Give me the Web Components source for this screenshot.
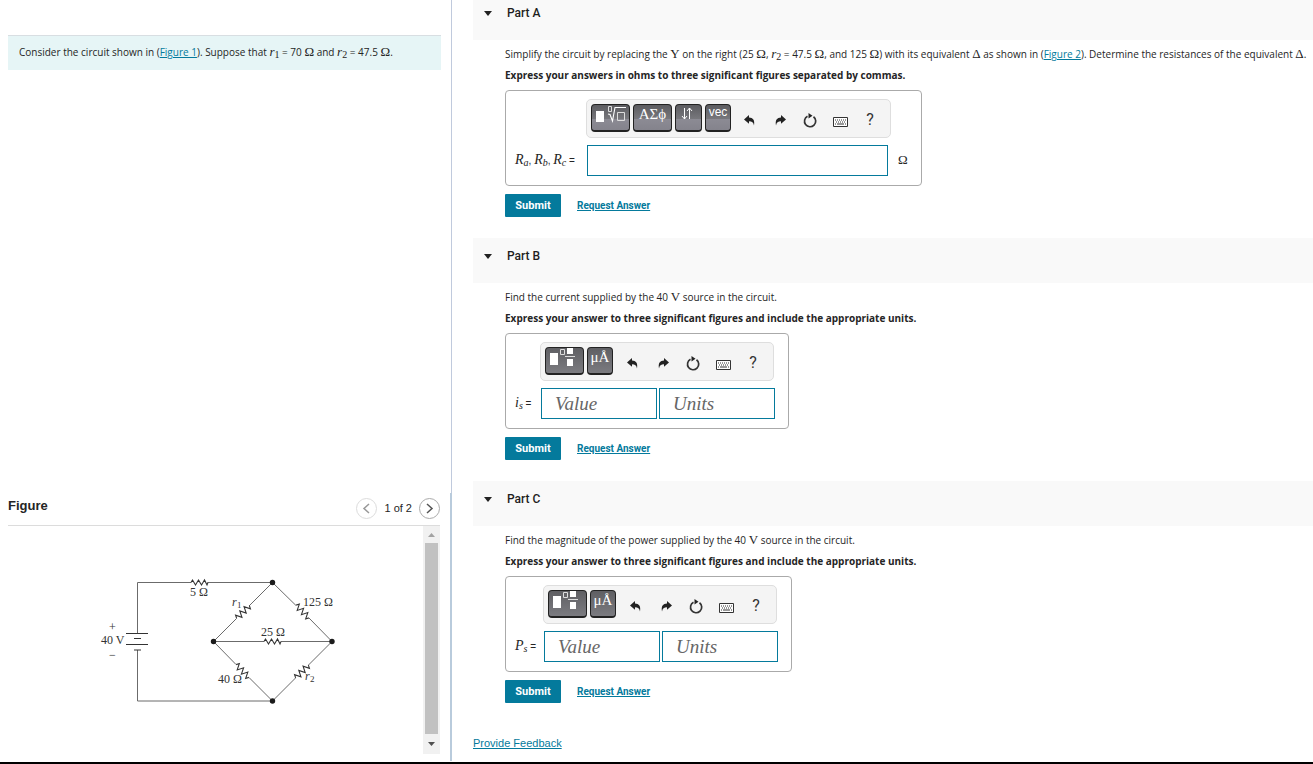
<!DOCTYPE html>
<html lang="en">
<head>
<meta charset="utf-8">
<title>Circuit homework</title>
<style>
  body { margin: 0; background: #fff; color: #252525; font-family: "Liberation Sans", Arial, sans-serif; font-size: 10px; }
</style>
</head>
<body>
<homework-page>
  <problem-intro slot="side">Consider the circuit shown in (<text-link>Figure 1</text-link>). Suppose that <math-text><i>r</i><sub>1</sub></math-text> = 70 <math-text>Ω</math-text> and <math-text><i>r</i><sub>2</sub></math-text> = 47.5 <math-text>Ω</math-text>.</problem-intro>
  <figure-viewer slot="side"><circuit-diagram></circuit-diagram></figure-viewer>

  <part-panel heading="Part A">
    <span slot="prompt">Simplify the circuit by replacing the <math-text>Y</math-text> on the right (25 <math-text>Ω</math-text>, <math-text><i>r</i><sub>2</sub></math-text> = 47.5 <math-text>Ω</math-text>, and 125 <math-text>Ω</math-text>) with its equivalent <math-text>Δ</math-text> as shown in (<text-link>Figure 2</text-link>). Determine the resistances of the equivalent <math-text>Δ</math-text>.</span>
    <span slot="hint">Express your answers in ohms to three significant figures separated by commas.</span>
    <answer-box kind="expression"></answer-box>
  </part-panel>
  <part-panel heading="Part B">
    <span slot="prompt">Find the current supplied by the 40 <math-text>V</math-text> source in the circuit.</span>
    <span slot="hint">Express your answer to three significant figures and include the appropriate units.</span>
    <answer-box kind="current"></answer-box>
  </part-panel>
  <part-panel heading="Part C">
    <span slot="prompt">Find the magnitude of the power supplied by the 40 <math-text>V</math-text> source in the circuit.</span>
    <span slot="hint">Express your answer to three significant figures and include the appropriate units.</span>
    <answer-box kind="power"></answer-box>
  </part-panel>
  <text-link slot="footer">Provide Feedback</text-link>
</homework-page>

<script>
function define(name, html, setup) {
  const template = document.createElement('template');
  template.innerHTML = html.replace('</style>\n', '</style>');
  customElements.define(name, class extends HTMLElement {
    constructor() {
      super();
      this.attachShadow({ mode: 'open' }).append(template.content.cloneNode(true));
    }
    connectedCallback() { if (setup) setup(this, this.shadowRoot); }
  });
}

define('text-link', `<style>
  :host { display: inline; }
  a { color: #047a9c; text-decoration: underline; text-underline-offset: 1px; }
</style>
<a href="#"><slot></slot></a>`);

define('math-text', `<style>
  :host { font-family: "Liberation Serif", "Times New Roman", serif; font-size: var(--math-size, 13px); font-weight: 400; line-height: 1px; }
  ::slotted(sub) { font-size: 10px; line-height: 1px; vertical-align: -2px; }
</style>
<slot></slot>`);

define('homework-page', `<style>
  :host { display: grid; grid-template-columns: minmax(0, 452fr) minmax(0, 861fr); height: 100vh; box-sizing: border-box; border-bottom: 2px solid #000; overflow: hidden; }
  aside { display: flex; flex-direction: column; justify-content: space-between; padding-top: 35px; border-right: 1px solid #c0cadd; margin-bottom: 1px; }
  main { margin-top: -5px; padding-left: 21px; }
  footer { padding-top: 12px; font-size: 11px; line-height: 14px; }
</style>
<aside><slot name="side"></slot></aside>
<main><slot></slot><footer><slot name="footer"></slot></footer></main>`);

define('problem-intro', `<style>
  :host { display: block; margin: 0 10px 0 8px; padding: 6px 11px 8px; background: #e6f5f6; border-top: 1px solid #d8dee2; line-height: 20px; white-space: nowrap; font-family: "Open Sans", "Liberation Sans", sans-serif; }
</style>
<slot></slot>`);

define('figure-viewer', `<style>
  :host { display: block; height: 268px; border-right: 2px solid #b9cbdc; margin-right: -1px; }
  header { display: flex; align-items: center; height: 32px; margin: 0 10px 0 8px; border-bottom: 1px solid #dcdcdc; }
  h2 { flex: 1; margin: 0 0 6px; font-size: 13px; line-height: 16px; }
  nav { display: flex; align-items: center; gap: 7px; margin-bottom: 2px; font-size: 11px; }
  button { display: grid; place-items: center; width: 21px; height: 21px; padding: 0; border: 1px solid #ababab; border-radius: 50%; background: #fff; }
  button:disabled { border-color: #dcdcdc; }
  svg { fill: none; stroke: #555; stroke-width: 1.5; }
  button:disabled svg { stroke: #999; }
  .frame { display: flex; height: 228px; margin: 0 10px 0 8px; }
  .view { flex: 1; min-width: 0; }
  .bar { display: flex; flex-direction: column; align-items: center; width: 17px; background: #f1f1f1; }
  .bar i { display: grid; place-items: center; height: 17px; }
  .bar b { flex: 1; width: 13px; background: #c1c1c1; }
  .bar svg { stroke: none; fill: #a3a3a3; }
  .bar .down svg { fill: #505050; }
  .bar .down { height: 20px; }
</style>
<header>
  <h2>Figure</h2>
  <nav>
    <button aria-label="Previous figure" disabled><svg width="11" height="13"><path d="M8 2 3 6.500 8 11"/></svg></button>
    <span>1 of 2</span>
    <button aria-label="Next figure"><svg width="11" height="13"><path d="M3 2 8 6.500 3 11"/></svg></button>
  </nav>
</header>
<div class="frame">
  <div class="view"><slot></slot></div>
  <div class="bar" aria-hidden="true">
    <i><svg width="7" height="4"><path d="M0 4h7L3.500 0z"/></svg></i><b></b>
    <i class="down"><svg width="7" height="4"><path d="M0 0h7L3.500 4z"/></svg></i>
  </div>
</div>`);

define('circuit-diagram', `<style>
  :host { display: block; }
  svg { display: block; }
  .wire { fill: none; stroke: #6b6b6b; stroke-width: 1; }
  .part { fill: none; stroke: #333; stroke-width: 1.1; }
  circle { fill: #1b1b1b; }
  text { font-family: "Liberation Serif", serif; font-size: 12px; fill: #333; }
  .it { font-style: italic; }
  .sub { font-size: 9px; }
</style>
<svg width="415" height="228" viewBox="8 526 415 228" role="img" aria-label="Circuit with a 40 volt source, a 5 ohm resistor and a bridge of resistors">
  <path class="wire" d="M137.500 633.500V582.500H191M207.500 582.500H272.500M137.500 650V701H272.500M272.500 582.500 249 606M236.500 618.500 213.500 641.500 236 664.500M249 677.500 272.500 701 295.500 678M308.500 665 332 641.500 309 618M296 605.500 272.500 582.500M213.500 641.500H264M281 641.500H332"/>
  <path class="part" d="M126 633.500h22M134 638.500h7M126 644.500h22M134 650h7"/>
  <path class="part" d="M191 582.500l1.500-2.500 3 5 3-5 3 5 3-5 2.500 5 1-2.500"/>
  <path class="part" d="M264 641.500l1.500-2.500 3 5 3-5 3 5 3-5 2.500 5 1-2.500"/>
  <g class="part">
    <path transform="translate(243 612) rotate(-45)" d="M-9 0l1.500-3 3 6 3-6 3 6 3-6 3 6 1.500-3"/>
    <path transform="translate(302.500 611.500) rotate(45)" d="M-9 0l1.500-3 3 6 3-6 3 6 3-6 3 6 1.500-3"/>
    <path transform="translate(242.500 671) rotate(45)" d="M-9 0l1.500-3 3 6 3-6 3 6 3-6 3 6 1.500-3"/>
    <path transform="translate(302 671.500) rotate(-45)" d="M-9 0l1.500-3 3 6 3-6 3 6 3-6 3 6 1.500-3"/>
  </g>
  <circle cx="272.500" cy="582.500" r="2.700"/><circle cx="213.500" cy="641.500" r="2.700"/><circle cx="332" cy="641.500" r="2.700"/><circle cx="272.500" cy="701" r="2.700"/>
  <text x="190" y="596">5 Ω</text>
  <text x="303" y="606">125 Ω</text>
  <text x="261" y="636">25 Ω</text>
  <text x="218" y="683">40 Ω</text>
  <text x="101" y="644">40 V</text>
  <text x="109" y="631">+</text>
  <text x="109" y="659">−</text>
  <text class="it" x="232" y="606">r</text><text class="sub" x="237" y="608">1</text>
  <text class="it" x="305" y="680">r</text><text class="sub" x="310" y="682">2</text>
</svg>`);

define('part-panel', `<style>
  :host { display: block; }
  header { display: flex; align-items: center; gap: 15px; height: 45px; box-sizing: border-box; padding: 0 0 9px 11px; background: #f9f9f9; }
  h2 { margin: 0; font: 500 12px/16px Roboto, "Liberation Sans", sans-serif; color: #1e1e1e; }
  .body { padding: 4px 0 21px 32px; }
  p { margin: 0; line-height: 21px; white-space: nowrap; font-family: "Open Sans", "Liberation Sans", sans-serif; }
  .hint { font-weight: 700; }
  .answer { margin: 4px 0 8px; }
  .actions { display: flex; align-items: center; gap: 16px; }
  button { width: 56px; height: 23px; padding: 0; border: 0; border-radius: 1px; background: #047a9c; color: #fff; font: 700 11px/16px Roboto, "Liberation Sans", sans-serif; }
  text-link { font: 700 10px/16px Roboto, "Liberation Sans", sans-serif; }
</style>
<header><svg width="8" height="5" aria-hidden="true"><path d="M0 0h8L4 5z" fill="#222"/></svg><h2></h2></header>
<div class="body">
  <p><slot name="prompt"></slot></p>
  <p class="hint"><slot name="hint"></slot></p>
  <div class="answer"><slot></slot></div>
  <div class="actions"><button type="button">Submit</button><text-link>Request Answer</text-link></div>
</div>`, (host, root) => {
  root.querySelector('h2').textContent = host.getAttribute('heading');
});

define('math-toolbar', `<style>
  :host { display: flex; align-items: flex-start; height: 39px; box-sizing: border-box; padding: 4px 5px 0 4px; border: 1px solid #dedede; border-radius: 5px; background: #f4f4f4; }
  .keys { display: flex; gap: 3px; margin-right: 4px; }
  .keys.flat { margin-right: 5px; }
  button { padding: 0; border: 0; background: none; color: #333; }
  .keys button { display: flex; justify-content: center; width: 26px; height: 28px; box-sizing: border-box; border: 1px solid #222; border-bottom-width: 2px; border-radius: 4px; background: linear-gradient(#5c5c60, #77777c 55%, #8c8b94 56%, #84838c); color: #fff; font: 12px/15px "Liberation Sans", sans-serif; }
  .keys button.mid { width: 27px; }
  .keys button.wide { width: 39px; }
  .keys .serif { font: 15px/18px "Liberation Serif", serif; }
  .flat button { background: linear-gradient(#5f5f63, #7b7b80); }
  .tool { display: grid; place-items: center; width: 30px; height: 28px; padding-top: 4px; font: 16px/20px Roboto, "Liberation Sans", sans-serif; }
</style>
<div class="keys"></div>
<button class="tool" aria-label="Undo"><svg width="12" height="11" viewBox="0 0 12 11"><path d="M5 0v2.500C9 2.700 11 5 10 10.500 9.500 7.500 8 6.300 5 6.300V8.800L0 4.400z" fill="#222"/></svg></button>
<button class="tool" aria-label="Redo"><svg width="12" height="11" viewBox="0 0 12 11"><path d="M7 0v2.500C3 2.700 1 5 2 10.500 2.500 7.500 4 6.300 7 6.300V8.800L12 4.400z" fill="#222"/></svg></button>
<button class="tool" aria-label="Reset"><svg width="14" height="15" viewBox="0 0 14 15"><path d="M4.500 3.200A5.600 5.600 0 1 0 10.500 3.700" fill="none" stroke="#333" stroke-width="1.700"/><path d="M5.500 0 9.500 2.700 5.500 5.400z" fill="#222"/></svg></button>
<button class="tool" aria-label="Keyboard shortcuts"><svg width="15" height="13" viewBox="0 -3 15 13"><path d="M.5.5h14v9H.5z" fill="#fff" stroke="#333"/><path d="M2 3h11M3 5h10" stroke="#333" stroke-dasharray="1 1"/><path d="M2 7h1M4 7h7M12 7h1" stroke="#333"/></svg></button>
<button class="tool" aria-label="Help">?</button>`, (host, root) => {
  const keys = root.querySelector('.keys');
  if (host.getAttribute('kind') === 'expression') {
    keys.innerHTML = `
      <button class="wide" aria-label="Templates"><svg width="33" height="20" viewBox="0 0 33 20"><path d="M2 6h8v11H2z" fill="#fff"/><path d="M14.500 1.500h3v5h-3zM23.500 7.500h7v8h-7z" fill="none" stroke="#ddd"/><path d="M14 9l2 .5 2.500 6.500L21 2.500h11" fill="none" stroke="#fff" stroke-width="1.100"/></svg></button>
      <button class="wide serif">ΑΣϕ</button>
      <button class="mid" aria-label="Arrows"><svg width="20" height="17" viewBox="0 0 20 17" fill="none" stroke="#fff"><path d="M5.500 3v11M3 11l2.500 3L8 11M10.500 14V3M8 6l2.500-3L13 6"/></svg></button>
      <button>vec</button>`;
  } else {
    keys.classList.add('flat');
    keys.innerHTML = `
      <button class="wide" aria-label="Templates"><svg width="33" height="20" viewBox="0 0 33 20"><path d="M2 5h8v12H2zM19 0h6v6h-6zM19 11h6v7h-6z" fill="#fff"/><path d="M12.500 1.500h4v5h-4z" fill="none" stroke="#ddd"/><path d="M17 8.500h10" stroke="#ddd"/></svg></button>
      <button class="serif">μÅ</button>`;
  }
});

define('answer-box', `<style>
  :host { display: block; }
  form { display: grid; grid-template-columns: var(--label) auto auto; width: max-content; height: 96px; box-sizing: border-box; padding: 8px 13px 9px 9px; row-gap: 7px; align-content: start; border: 1px solid #aaa; border-radius: 4px; }
  :host([kind=expression]) { --label: 72px; }
  :host([kind=current]) { --label: 26px; }
  :host([kind=power]) { --label: 29px; }
  math-toolbar { grid-column: 2 / 4; justify-self: start; margin-left: -1px; }
  label { align-self: center; white-space: nowrap; word-spacing: normal; --math-size: 14px; }
  .fields { display: flex; gap: 2px; }
  input { width: 116px; height: 31px; box-sizing: border-box; padding: 0 0 0 13px; border: 1px solid #047a9c; border-radius: 0; background: #fff; color: #222; font: italic 19px/24px "Liberation Serif", serif; }
  input::placeholder { color: #666; opacity: 1; }
  input.full { width: 301px; padding: 0 8px; }
  .unit { align-self: center; padding-left: 10px; }
</style>
<form></form>`, (host, root) => {
  const kind = host.getAttribute('kind');
  const form = root.querySelector('form');
  if (kind === 'expression') {
    form.innerHTML = `<math-toolbar kind="expression"></math-toolbar>
      <label for="f"><math-text><i>R</i><sub><i>a</i></sub></math-text>, <math-text><i>R</i><sub><i>b</i></sub></math-text>, <math-text><i>R</i><sub><i>c</i></sub></math-text> =</label>
      <input id="f" class="full"><span class="unit"><math-text>Ω</math-text></span>`;
  } else {
    const symbol = kind === 'current' ? 'i' : 'P';
    form.innerHTML = `<math-toolbar></math-toolbar>
      <label for="f"><math-text><i>${symbol}</i><sub><i>s</i></sub></math-text> =</label>
      <div class="fields"><input id="f" placeholder="Value"><input aria-label="Units" placeholder="Units"></div>`;
  }
});
</script>
</body>
</html>
